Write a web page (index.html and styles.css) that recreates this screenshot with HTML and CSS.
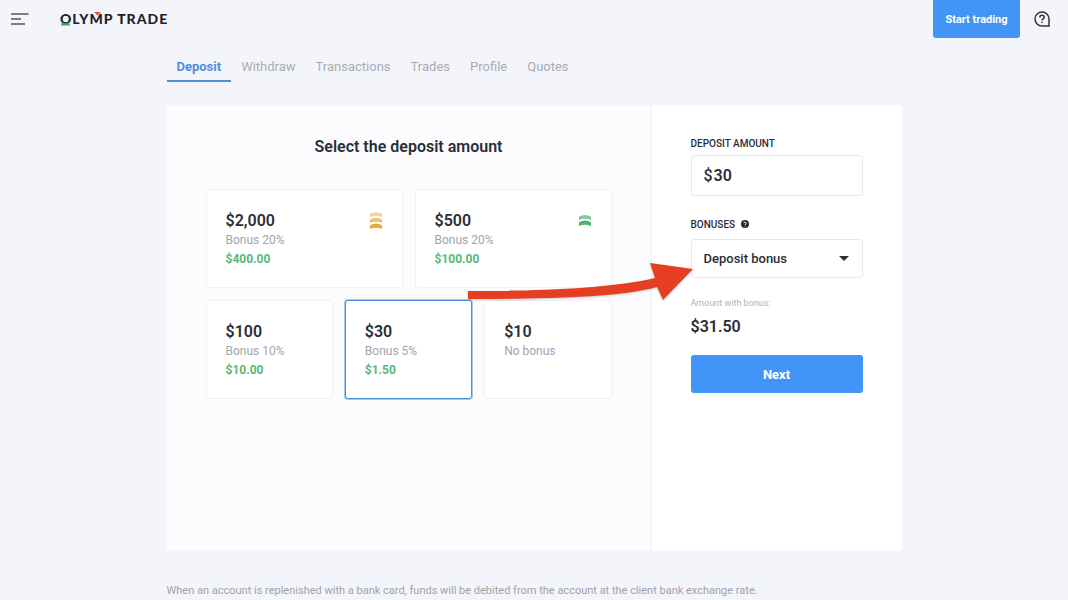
FILE: index.html
```html
<!DOCTYPE html>
<html lang="en">
<head>
    <meta charset="utf-8">
    <meta name="viewport" content="width=device-width, initial-scale=1">
    <title>Olymp Trade - Deposit</title>
    <link rel="stylesheet" href="styles.css">
</head>
<body>
    <header class="header">
        <button type="button" class="icon-button" aria-label="Menu">
            <svg width="18" height="12" viewBox="0 0 18 12" stroke="#55585f" stroke-width="1.5">
                <path d="M0 1h17.5M0 6h10M0 11h14"/>
            </svg>
        </button>
        <a href="#" class="logo">
            <span>OLYMP TRADE</span>
            <svg class="logo-marks" width="50" height="16" viewBox="0 0 50 16">
                <path d="M2 11c2 1.6 5 1.6 7 0l1 3.5H1z" fill="#35a566"/>
                <path d="M34 1h7l-3.5 3.5z" fill="#dc5539"/>
            </svg>
        </a>
        <button type="button" class="start-button">Start trading</button>
        <button type="button" class="icon-button" aria-label="Help">
            <svg width="16" height="16" viewBox="0 0 16 16" fill="none" stroke="#33363c" stroke-width="1.5">
                <path d="M8 1a7 7 0 1 0 0 14h7V8a7 7 0 0 0-7-7z"/>
                <path d="M5.8 6.4c0-1.4 1-2.2 2.2-2.2s2.2.8 2.2 2c0 1.6-2.2 1.7-2.2 3.4M8 10.7v1.4"/>
            </svg>
        </button>
    </header>

    <main class="page">
        <nav class="tabs">
            <a href="#" class="tab active">Deposit</a>
            <a href="#" class="tab">Withdraw</a>
            <a href="#" class="tab">Transactions</a>
            <a href="#" class="tab">Trades</a>
            <a href="#" class="tab">Profile</a>
            <a href="#" class="tab">Quotes</a>
        </nav>

        <form class="panel">
            <section class="amounts">
                <h1 class="title">Select the deposit amount</h1>
                <div class="cards">
                    <button type="button" class="card wide" data-amount="2000">
                        <span class="card-amount">$2,000</span>
                        <span class="card-bonus">Bonus 20%</span>
                        <span class="card-extra">$400.00</span>
                        <svg class="card-icon" width="12" height="18" viewBox="0 0 12 18" fill="#eba63c">
                            <path opacity=".5" d="M0 1.6Q6-.8 12 1.6V5Q6 2.8 0 5z"/>
                            <path opacity=".7" d="M0 7.2Q6 4.2 12 7.2V11Q6 8.4 0 11z"/>
                            <path d="M0 13.2Q6 10 12 13.2V17Q6 14.4 0 17z"/>
                        </svg>
                    </button>
                    <button type="button" class="card wide" data-amount="500">
                        <span class="card-amount">$500</span>
                        <span class="card-bonus">Bonus 20%</span>
                        <span class="card-extra">$100.00</span>
                        <svg class="card-icon" width="12" height="18" viewBox="0 0 12 18" fill="#4db36f">
                            <path opacity=".7" d="M0 4.4Q6 1.4 12 4.4V8Q6 5.4 0 8z"/>
                            <path d="M0 10.2Q6 7 12 10.2V14Q6 11.6 0 14z"/>
                        </svg>
                    </button>
                    <button type="button" class="card" data-amount="100">
                        <span class="card-amount">$100</span>
                        <span class="card-bonus">Bonus 10%</span>
                        <span class="card-extra">$10.00</span>
                    </button>
                    <button type="button" class="card selected" data-amount="30">
                        <span class="card-amount">$30</span>
                        <span class="card-bonus">Bonus 5%</span>
                        <span class="card-extra">$1.50</span>
                    </button>
                    <button type="button" class="card" data-amount="10">
                        <span class="card-amount">$10</span>
                        <span class="card-bonus">No bonus</span>
                    </button>
                </div>
                <svg class="arrow" width="228" height="44" viewBox="0 0 228 44" fill="#e63e23">
                    <path d="M1 31C70 31 140 29 188 18L183 3L226 9L196 40L190 27C150 38 70 39 1 39z"/>
                </svg>
            </section>

            <section class="summary">
                <label class="label" for="amount">DEPOSIT AMOUNT</label>
                <div class="field">
                    <span class="currency">$</span>
                    <input type="text" id="amount" class="amount-input" value="30">
                </div>
                <label class="label bonus-label" for="bonus">BONUSES
                    <svg class="hint" width="8" height="8" viewBox="0 0 8 8">
                        <circle cx="4" cy="4" r="4" fill="#26282f"/>
                        <path d="M2.8 3.2c0-1.6 2.4-1.6 2.4 0C5.2 4 4 4 4 5M4 5.7v.8" fill="none" stroke="#fff" stroke-width=".9"/>
                    </svg>
                </label>
                <div class="field bonus-field">
                    <select id="bonus" class="bonus-select">
                        <option>Deposit bonus</option>
                        <option>No bonus</option>
                    </select>
                    <svg class="caret" width="10" height="5" viewBox="0 0 10 5">
                        <path d="M0 0h10L5 5z" fill="#2b2e38"/>
                    </svg>
                </div>
                <p class="total-label">Amount with bonus:</p>
                <p class="total">$31.50</p>
                <button type="submit" class="next-button">Next</button>
            </section>
        </form>

        <p class="note">When an account is replenished with a bank card, funds will be debited from the account at the client bank exchange rate.</p>
    </main>
</body>
</html>
```

FILE: styles.css
```css
* {
    box-sizing: border-box;
}

body {
    margin: 0;
    background-color: #f4f5fa;
    color: #2b2e38;
    font-family: Roboto, sans-serif;
    font-size: 13px;
}

button,
input,
select {
    font-family: inherit;
    color: inherit;
}

button {
    cursor: pointer;
}

svg {
    display: block;
}

.header {
    display: flex;
    align-items: center;
    height: 38px;
    padding: 0 18px 0 11px;
}

.icon-button {
    padding: 0;
    border: none;
    background: none;
}

.logo {
    position: relative;
    margin-left: 31px;
    margin-right: auto;
    color: #1f2126;
    font-family: Lato, sans-serif;
    font-size: 14px;
    font-weight: 900;
    letter-spacing: 1px;
    line-height: 16px;
    text-decoration: none;
}

.logo-marks {
    position: absolute;
    top: 0;
    left: 0;
}

.start-button {
    align-self: stretch;
    width: 87px;
    margin-right: 14px;
    padding: 0;
    border: none;
    border-radius: 0 0 3px 3px;
    background-color: #4294f7;
    color: #fff;
    font-size: 11px;
    font-weight: 700;
}

.page {
    max-width: 735px;
    margin: 0 auto;
}

.tabs {
    display: flex;
    height: 44px;
    margin-bottom: 23px;
}

.tab {
    padding: 20px 10px 0;
    color: #a9acb5;
    line-height: 18px;
    text-decoration: none;
}

.tab.active {
    border-bottom: 2px solid #4b8fdc;
    color: #4b8fdc;
    font-weight: 700;
}

.panel {
    display: flex;
    min-height: 446px;
    border-radius: 3px;
    background-color: #fff;
}

.amounts {
    position: relative;
    flex: 1;
    padding: 32px 39px 40px;
    border-right: 1px solid #eff0f5;
    border-radius: 3px 0 0 3px;
    background-color: #fcfcfe;
}

.title {
    margin: 0 0 32px;
    font-size: 16px;
    font-weight: 600;
    line-height: 20px;
    text-align: center;
}

.cards {
    display: grid;
    grid-template-columns: repeat(6, 1fr);
    gap: 12px;
}

.card {
    position: relative;
    display: flex;
    flex-direction: column;
    grid-column: span 2;
    min-height: 99px;
    padding: 20px 19px 18px;
    border: 1px solid #f0f1f6;
    border-radius: 3px;
    background-color: #fff;
    font-size: 12px;
    line-height: 19px;
    text-align: left;
}

.card.wide {
    grid-column: span 3;
}

.card.selected {
    border-color: #4b8fdc;
    box-shadow: 0 0 0 1px #a5c8ef;
}

.card-amount {
    font-size: 16px;
    font-weight: 600;
    line-height: 21px;
}

.card-bonus {
    color: #a3a4a9;
}

.card-extra {
    color: #5ab877;
    font-weight: 700;
}

.card-icon {
    position: absolute;
    top: 22px;
    right: 20px;
}

.arrow {
    position: absolute;
    top: 155px;
    right: -44px;
    filter: drop-shadow(0 1px 1px #0003);
    pointer-events: none;
}

.summary {
    display: flex;
    flex-direction: column;
    width: 250px;
    padding: 32px 39px;
}

.label {
    display: flex;
    align-items: center;
    gap: 6px;
    height: 12px;
    margin-bottom: 6px;
    font-size: 10px;
    font-weight: 500;
}

.field {
    display: flex;
    align-items: center;
    height: 41px;
    margin-bottom: 22px;
    padding: 0 13px 0 12px;
    border: 1px solid #e8e9ee;
    border-radius: 3px;
    font-size: 16px;
    font-weight: 500;
}

.bonus-label {
    margin-bottom: 9px;
}

.bonus-field {
    height: 39px;
    margin-bottom: 19px;
}

.amount-input {
    width: 100%;
    padding: 0 1px;
    border: none;
    background: none;
    font-size: 16px;
    font-weight: 600;
}

.bonus-select {
    width: 100%;
    padding: 0;
    border: none;
    background: none;
    appearance: none;
    font-size: 13px;
    font-weight: 500;
}

.caret {
    flex: none;
    pointer-events: none;
}

.total-label {
    margin: 0 0 8px;
    color: #b0b1b6;
    font-size: 9px;
    line-height: 12px;
}

.total {
    margin: 0 0 18px;
    font-size: 16px;
    font-weight: 600;
    line-height: 20px;
}

.next-button {
    height: 38px;
    padding: 0;
    border: none;
    border-radius: 3px;
    background-color: #4294f7;
    color: #fff;
    font-size: 13px;
    font-weight: 700;
}

.note {
    margin: 32px 0 0;
    color: #a0a2a9;
    font-size: 11px;
    line-height: 16px;
}
```
